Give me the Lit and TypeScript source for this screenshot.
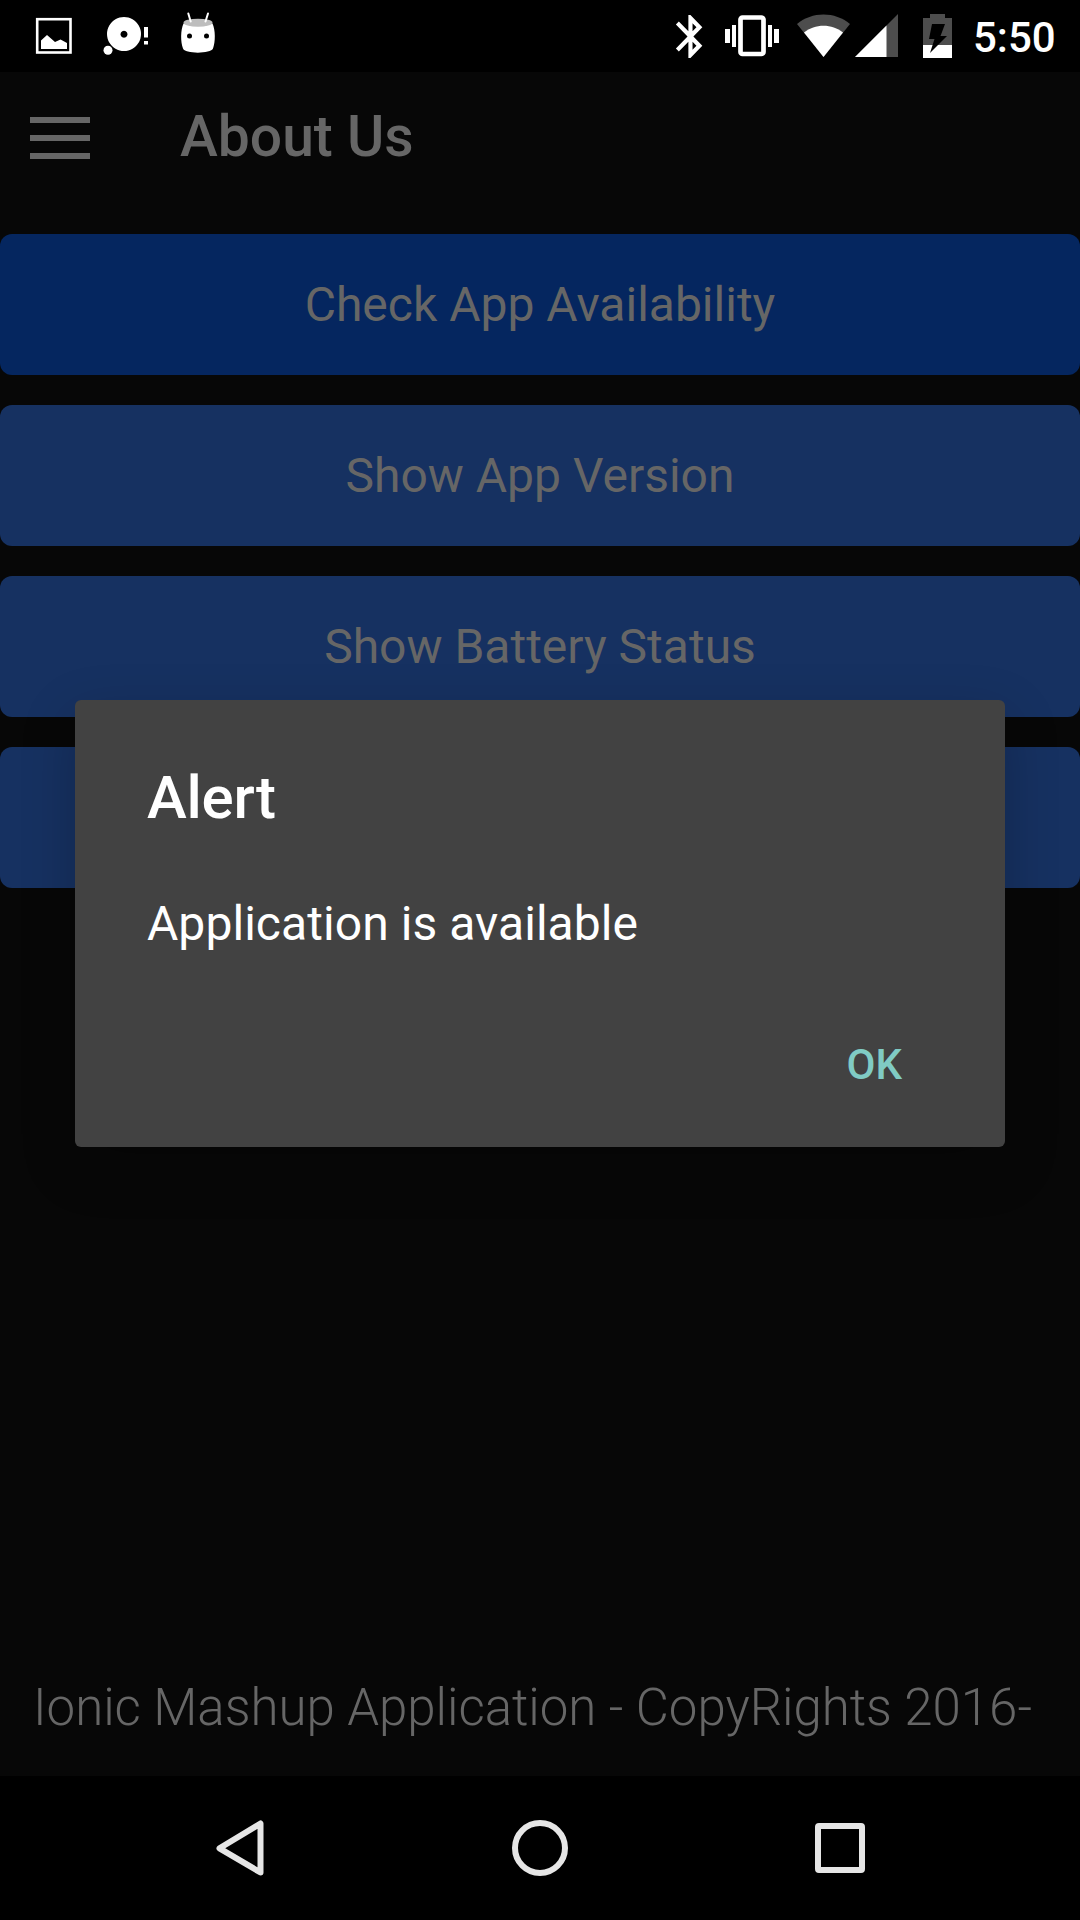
import { LitElement, html, css, svg } from "lit";
import { customElement } from "lit/decorators.js";
import { classMap } from "lit/directives/class-map.js";

@customElement("status-bar")
class StatusBar extends LitElement {
  static styles = css`
    :host { display: flex; height: 72px; background: #000; color: #fff; }
    .icons { display: block; width: 960px; height: 72px; flex: none; }
    .clock { flex: 1; padding-left: 13px; font: 500 42px/75px Roboto, sans-serif; white-space: nowrap; }
  `;
  render() {
    return html`
      <svg class="icons" viewBox="0 0 960 72" fill="#fff">
        ${svg`
        <rect x="37.2" y="19.2" width="33.3" height="33.3" fill="none" stroke="#fff" stroke-width="2.600"/>
        <path d="M41 40.500L47 35L55 42L60.500 39.500L67 43V49H41Z"/>
        <path fill-rule="evenodd" d="M124 17a17 17 0 1 0 .01 0ZM124 30.700a3.500 3.500 0 1 1-.01 0Z"/>
        <circle cx="108" cy="50.300" r="4.500"/>
        <path d="M144 27h4v10.500h-4ZM144 41h4v3.500h-4Z"/>
        <path d="M183.500 23.500C180.500 30 180.500 42 183 48.500C184.500 54 211 54 213 48.500C215.500 42 215.500 30 212.500 23.500Z"/>
        <ellipse cx="198" cy="22.700" rx="14.500" ry="4" fill="#bdbdbd"/>
        <path d="M188.300 13.500L190.700 21.500M208 13.500L205.500 21.500" stroke="#fff" stroke-width="2" stroke-linecap="round"/>
        <circle cx="189.500" cy="36" r="2.500" fill="#000"/><circle cx="206.500" cy="36" r="2.500" fill="#000"/>
        <path transform="translate(665.5 10.700) scale(2.080 2.150)" fill-rule="evenodd" d="M17.710 7.710L12 2h-1v7.590L6.410 5 5 6.410 10.590 12 5 17.590 6.410 19 11 14.410V22h1l5.710-5.710-4.300-4.290 4.300-4.290zM13 5.830l1.880 1.880L13 9.590V5.830zm1.880 10.460L13 18.170v-3.760l1.880 1.880z"/>
        <rect x="740.500" y="17.500" width="23" height="36.500" rx="2" fill="none" stroke="#fff" stroke-width="4.700"/>
        <path d="M725 29h5v14h-5ZM732 25h4v22h-4ZM768 25h4v22h-4ZM774 29h5v14h-5Z"/>
        <path d="M797 24C812 11.300 835 11.300 850 24L823.500 57Z" fill="#4d4d4d"/>
        <path d="M804 32.500C815 23.500 832 23.500 843 32.500L823.500 57Z"/>
        <path d="M855 57L898 14V57Z" fill="#4d4d4d"/><path d="M855 57L886.500 25.500V57Z"/>
        <path d="M923 18h7v-4h15v4h7v27h-29Z" fill="#4d4d4d"/><path d="M923 45h29v13h-29Z"/>
        <path d="M932 24h13l-4.500 12h6.500L930 53l4.500-14H929Z" fill="#000"/>
        `}
      </svg>
      <div class="clock">5:50</div>`;
  }
}

@customElement("about-page")
class AboutPage extends LitElement {
  static styles = css`
    :host { display: flex; flex-direction: column; background: #070707; color: #666; font-family: Roboto, sans-serif; }
    .header { display: flex; align-items: flex-start; height: 132px; flex: none; padding-left: 30px; }
    .menu { display: flex; flex-direction: column; gap: 12px; width: 60px; margin-top: 45px; }
    .bar { height: 6px; background: #666; }
    .title { margin: 30px 0 0 90px; font-size: 57px; line-height: 70px; font-weight: 500; white-space: nowrap; }
    .list { display: flex; flex-direction: column; gap: 30px; padding-top: 30px; flex: 1; }
    .button { display: block; width: 100%; height: 141px; border: 0; border-radius: 12px; padding: 0; background: #163161;
      color: #666; font: 400 48px/141px Roboto, sans-serif; text-align: center; }
    .pressed { background: #05265f; }
    .footer { height: 138px; padding-left: 33px; font-size: 51px; line-height: 140px; font-weight: 300; letter-spacing: -0.025px; white-space: nowrap; }
  `;
  private actions = [
    { label: "Check App Availability", pressed: true },
    { label: "Show App Version", pressed: false },
    { label: "Show Battery Status", pressed: false },
    { label: "", pressed: false },
  ];
  render() {
    return html`
      <div class="header">
        <div class="menu"><div class="bar"></div><div class="bar"></div><div class="bar"></div></div>
        <div class="title">About Us</div>
      </div>
      <div class="list">
        ${this.actions.map((a) => html`<button class=${classMap({ button: true, pressed: a.pressed })}>${a.label}</button>`)}
      </div>
      <div class="footer">Ionic Mashup Application - CopyRights 2016-</div>`;
  }
}

@customElement("alert-dialog")
class AlertDialog extends LitElement {
  static styles = css`
    :host { display: flex; flex-direction: column; box-sizing: border-box; width: 930px; height: 447px; padding: 63px 72px 0;
      border-radius: 6px; background: #424242; color: #fff; font-family: Roboto, sans-serif; box-shadow: 0 18px 54px rgba(0, 0, 0, 0.22); }
    .title { font-size: 60px; line-height: 70px; font-weight: 500; letter-spacing: -0.25px; }
    .message { margin-top: 61px; font-size: 48px; line-height: 60px; letter-spacing: 0.06px; }
    .ok { align-self: flex-end; margin: 86px 31px 0 0; font-size: 42px; line-height: 50px; font-weight: 500; color: #80cbc4; }
  `;
  render() {
    return html`
      <div class="title">Alert</div>
      <div class="message">Application is available</div>
      <div class="ok">OK</div>`;
  }
}

@customElement("nav-bar")
class NavBar extends LitElement {
  static styles = css`
    :host { display: block; height: 144px; background: #000; }
    .icons { display: block; width: 1080px; height: 144px; }
  `;
  render() {
    return html`
      <svg class="icons" viewBox="0 0 1080 144" fill="none" stroke="#e6e6e6" stroke-width="6" stroke-linejoin="round">
        <path d="M260.500 47.500V96.500L219.500 72.300Z"/>
        <circle cx="540" cy="72" r="25"/>
        <rect x="818" y="50" width="44" height="44" rx="1"/>
      </svg>`;
  }
}

@customElement("app-root")
class AppRoot extends LitElement {
  static styles = css`
    :host { display: block; }
    .screen { position: relative; display: flex; flex-direction: column; width: 1080px; height: 1920px; overflow: hidden; background: #000; }
    .page { flex: 1; }
    .dialog { position: absolute; left: 75px; top: 700px; }
  `;
  render() {
    return html`
      <div class="screen">
        <status-bar></status-bar>
        <about-page class="page"></about-page>
        <nav-bar></nav-bar>
        <alert-dialog class="dialog"></alert-dialog>
      </div>`;
  }
}
